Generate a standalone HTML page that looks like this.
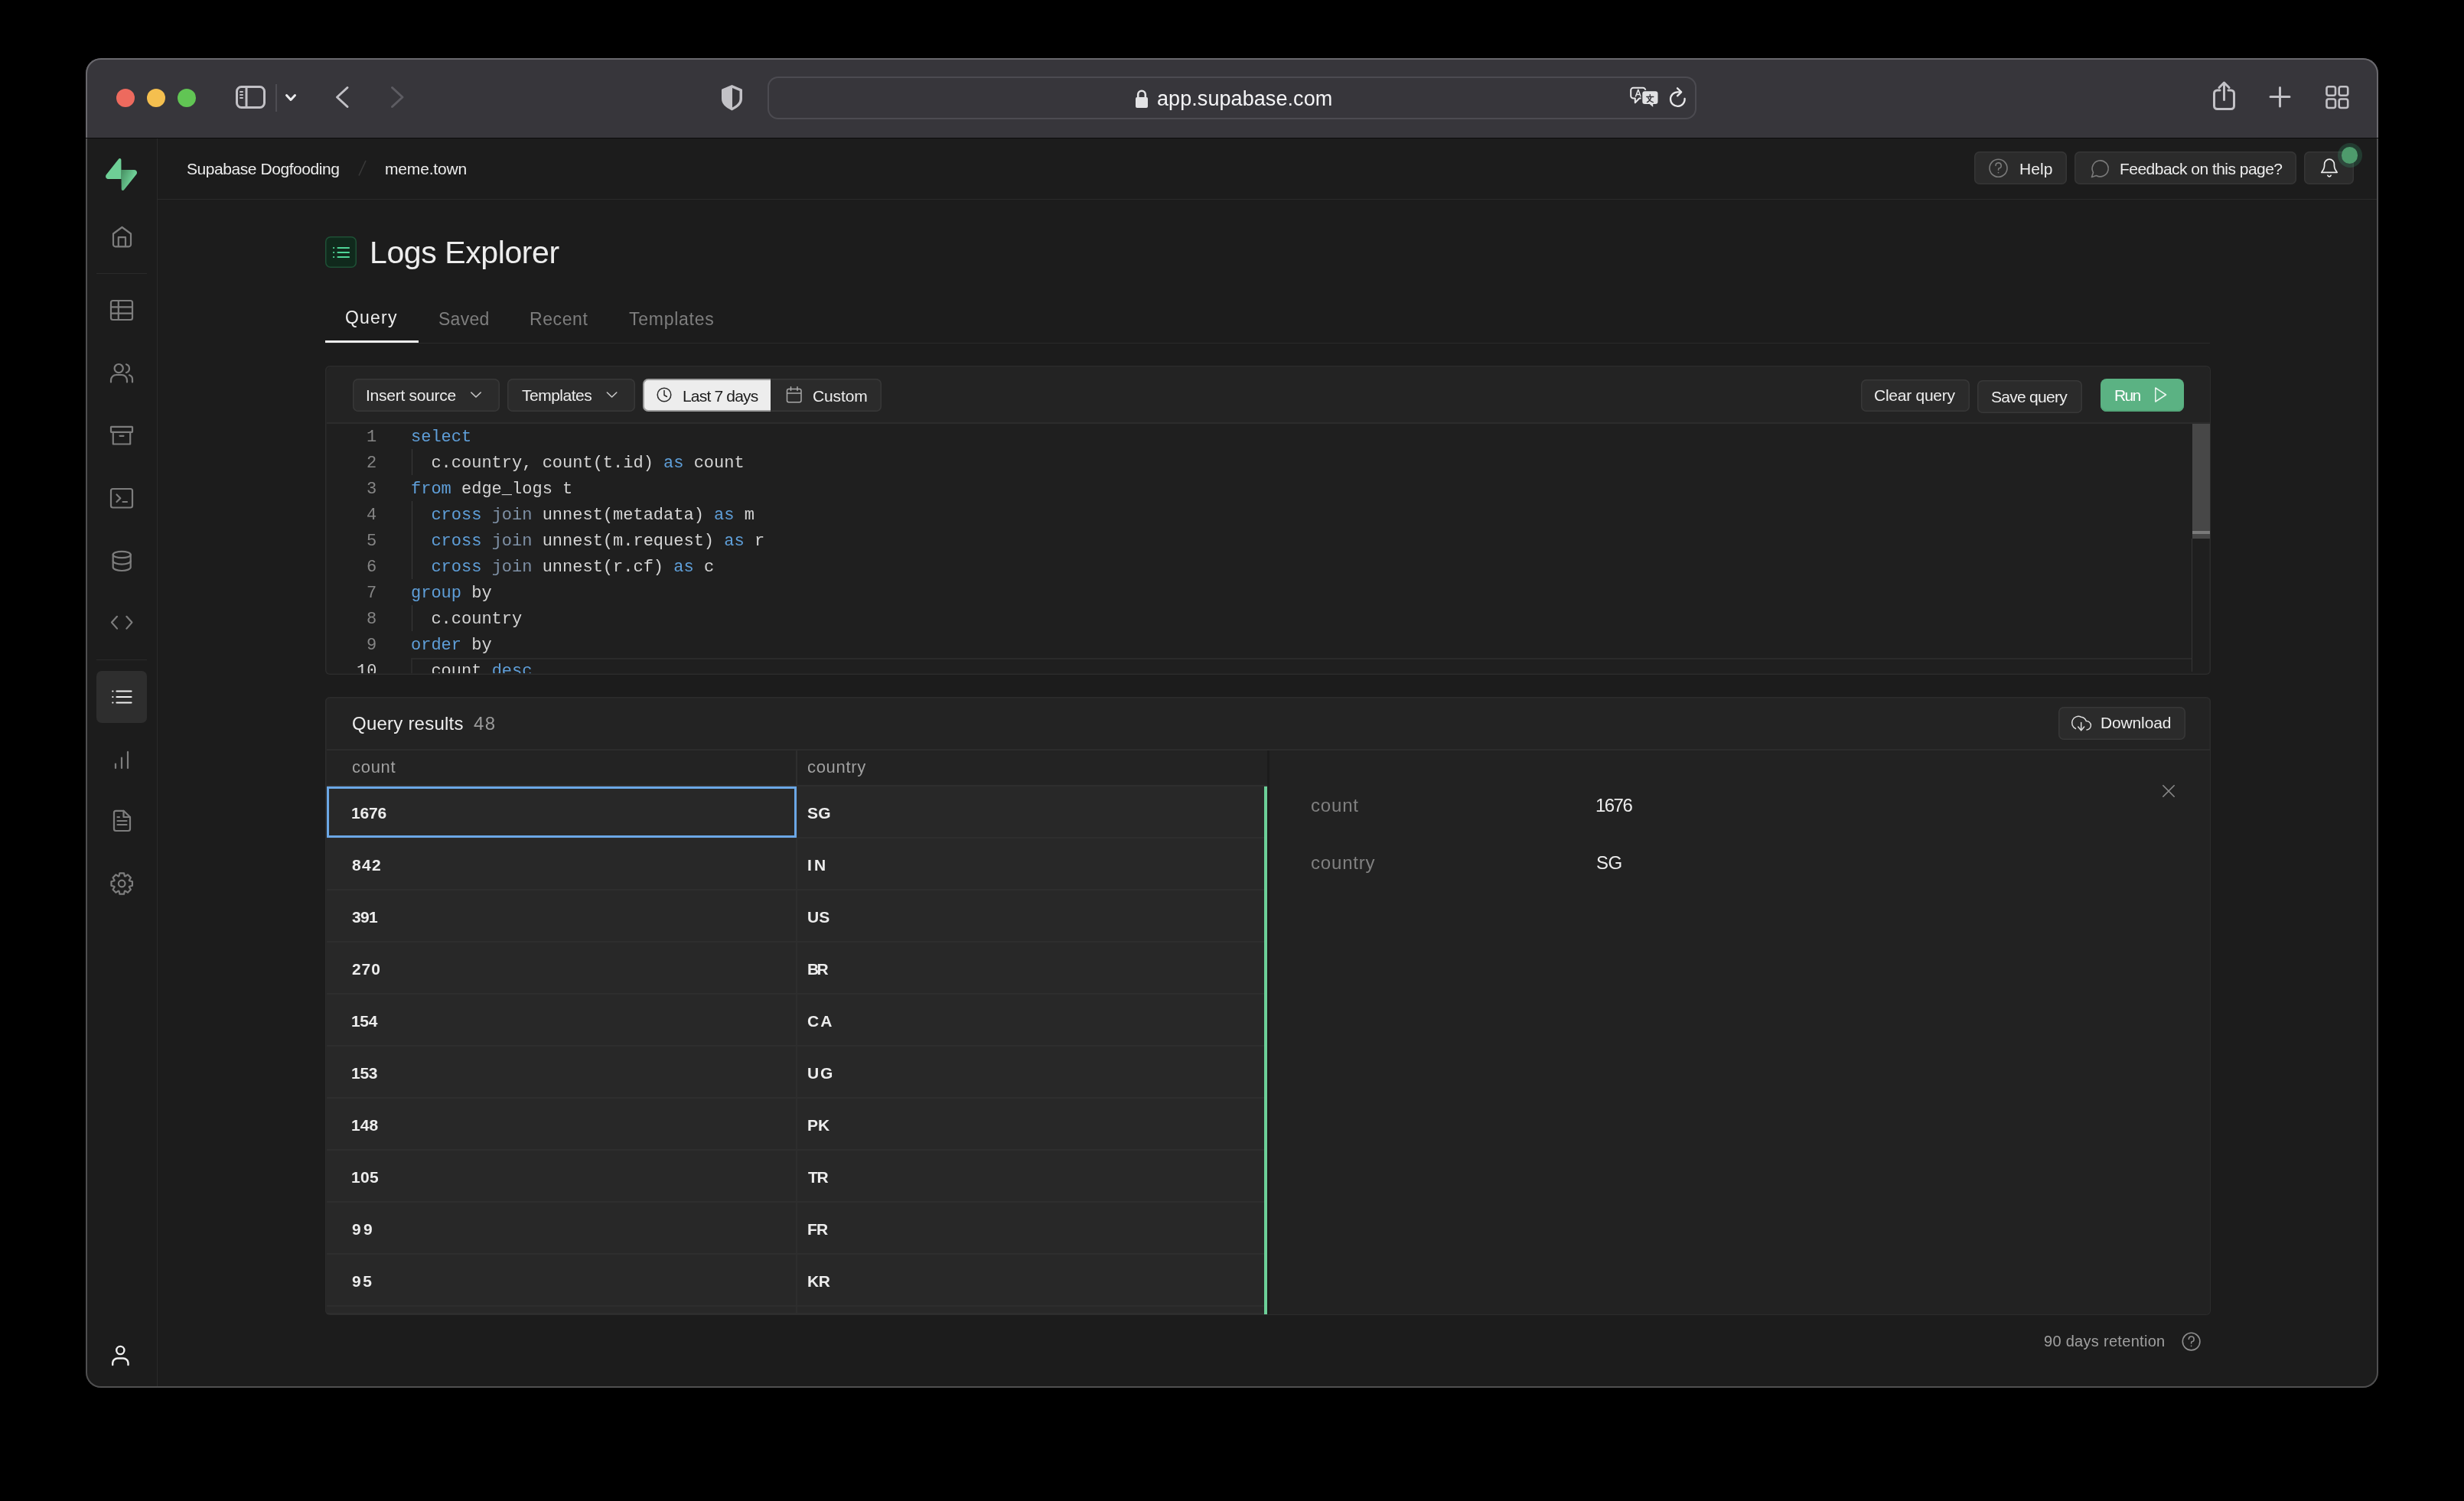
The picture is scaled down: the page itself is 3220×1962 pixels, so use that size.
<!DOCTYPE html>
<html><head><meta charset="utf-8"><title>Logs Explorer</title>
<style>
*{box-sizing:border-box;margin:0;padding:0}
html,body{width:3220px;height:1962px;background:#000;overflow:hidden}
body{position:relative;font-family:"Liberation Sans",sans-serif;color:#ededed}
.a{position:absolute}
.t{position:absolute;white-space:pre;line-height:1;will-change:transform}
.mono{font-family:"Liberation Mono",monospace}
svg{position:absolute;overflow:visible}
</style></head>
<body>
<div class="a" style="left:112px;top:76px;width:2996px;height:1738px;border-radius:20px;background:#1c1c1c;overflow:hidden"></div>
<div class="a" style="left:112px;top:76px;width:2996px;height:104px;border-radius:20px 20px 0 0;background:#37363b"></div>
<div class="a" style="left:112px;top:180px;width:2996px;height:1px;background:#0b0b0b"></div>
<div class="a" style="left:112px;top:76px;width:2996px;height:104px;overflow:hidden"><div class="a" style="left:0;top:0;width:2996px;height:1738px;border-radius:20px;box-shadow:inset 0 0 0 2px #69686d"></div></div>
<div class="a" style="left:112px;top:181px;width:2996px;height:1633px;overflow:hidden"><div class="a" style="left:0;top:-105px;width:2996px;height:1738px;border-radius:20px;box-shadow:inset 0 0 0 2px #4f4f50"></div></div>
<div class="a" style="left:152px;top:116px;width:24px;height:24px;border-radius:50%;background:#ed6a5e"></div>
<div class="a" style="left:192px;top:116px;width:24px;height:24px;border-radius:50%;background:#f4bf4f"></div>
<div class="a" style="left:232px;top:116px;width:24px;height:24px;border-radius:50%;background:#61c554"></div>
<svg style="left:300px;top:105px;width:100px;height:45px;" viewBox="300 105 100 45" fill="none"><rect x="309.5" y="113.5" width="36" height="27" rx="6" stroke="#c2c1c6" stroke-width="3"/><line x1="322" y1="113" x2="322" y2="141" stroke="#c2c1c6" stroke-width="3"/><g stroke="#c2c1c6" stroke-width="2" stroke-linecap="round"><line x1="314" y1="120" x2="317" y2="120"/><line x1="314" y1="124" x2="317" y2="124"/><line x1="314" y1="128" x2="317" y2="128"/></g><line x1="361" y1="110" x2="361" y2="146" stroke="#4d4c52" stroke-width="2"/><polyline points="374.5,124.5 380,130.5 385.5,124.5" stroke="#ececee" stroke-width="3" stroke-linecap="round" stroke-linejoin="round"/></svg>
<svg style="left:430px;top:105px;width:110px;height:45px;" viewBox="430 105 110 45" fill="none"><polyline points="454,114.5 440.5,127 454,139.5" stroke="#c2c1c6" stroke-width="3" stroke-linecap="round" stroke-linejoin="round"/><polyline points="512.5,114.5 526,127 512.5,139.5" stroke="#5d5c62" stroke-width="3" stroke-linecap="round" stroke-linejoin="round"/></svg>
<svg style="left:940px;top:108px;width:35px;height:40px;" viewBox="940 108 35 40" fill="none"><path d="M956.5 111 L969.5 116.5 C970 117 970 118 970 119 L970 129 C970 136 965 140 956.5 144.5 C948 140 943 136 943 129 L943 119 C943 118 943 117 943.5 116.5 Z" fill="#c2c1c6"/><path d="M957 115 L966.5 119 L966.5 129 C966.5 134 963 137 957 140.5 Z" fill="#37363b"/></svg>
<div class="a" style="left:1003px;top:100px;width:1214px;height:56px;border-radius:14px;box-shadow:inset 0 0 0 2px #4c4b51"></div>
<svg style="left:1480px;top:115px;width:25px;height:30px;" viewBox="1480 115 25 30" fill="none"><path d="M1487.2 128 V123.5 A4.8 4.8 0 0 1 1496.8 123.5 V128" stroke="#e2e2e4" stroke-width="2.6"/><rect x="1484" y="127" width="16" height="14" rx="2" fill="#e2e2e4"/></svg>
<div class="t" style="left:1512.43px;top:116.14px;font-size:27px;color:#f4f4f6;font-family:'Liberation Sans',sans-serif;letter-spacing:0.074px">app.supabase.com</div>
<svg style="left:2125px;top:110px;width:47px;height:36px;" viewBox="2125 110 47 36" fill="none"><path d="M2134.5 114.8 H2147 A3.3 3.3 0 0 1 2150.3 118.1 V125.2 A3.3 3.3 0 0 1 2147 128.5 H2142.3 L2136.8 134.3 V128.5 H2134.5 A3.3 3.3 0 0 1 2131.2 125.2 V118.1 A3.3 3.3 0 0 1 2134.5 114.8Z" stroke="#e6e6e8" stroke-width="2" stroke-linejoin="round"/><path d="M2137.3 126.5 L2140.8 117.3 L2144.3 126.5 M2138.4 123.6 H2143.2" stroke="#e6e6e8" stroke-width="1.5" stroke-linejoin="round"/><path d="M2149.5 118.5 H2163.3 A4 4 0 0 1 2167.3 122.5 V132.8 A4 4 0 0 1 2163.3 136.8 H2161 V141.5 L2155.3 136.8 H2149.5 A4 4 0 0 1 2145.5 132.8 V122.5 A4 4 0 0 1 2149.5 118.5Z" fill="#e2e2e4" stroke="#37363b" stroke-width="1.6"/><path d="M2151.8 126.5 H2160.8 M2156.3 123.8 V126.5 M2152.5 133.6 C2155 132.3 2157.2 129.5 2157.8 126.5 M2153.8 127.8 C2155.2 130.8 2157.5 133 2160.3 133.6" stroke="#37363b" stroke-width="1.4" stroke-linecap="round"/></svg>
<svg style="left:2178px;top:110px;width:30px;height:36px;" viewBox="2178 110 30 36" fill="none"><path d="M2201.6 128.8 A9.3 9.3 0 1 1 2192.3 120.3 H2195.5" stroke="#e8e8ea" stroke-width="2.3" stroke-linecap="round"/><polyline points="2192,115.3 2197.2,120.3 2192,125.3" stroke="#e8e8ea" stroke-width="2.3" stroke-linecap="round" stroke-linejoin="round"/></svg>
<svg style="left:2885px;top:102px;width:45px;height:46px;" viewBox="2885 102 45 46" fill="none"><path d="M2901 118 H2897.5 A4 4 0 0 0 2893.5 122 V138.5 A4 4 0 0 0 2897.5 142.5 H2915.5 A4 4 0 0 0 2919.5 138.5 V122 A4 4 0 0 0 2915.5 118 H2912" stroke="#c2c1c6" stroke-width="3" stroke-linecap="round"/><path d="M2906.5 130.5 V108.5 M2900 114.5 L2906.5 108 L2913 114.5" stroke="#c2c1c6" stroke-width="3" stroke-linecap="round" stroke-linejoin="round"/></svg>
<svg style="left:2960px;top:108px;width:40px;height:38px;" viewBox="2960 108 40 38" fill="none"><path d="M2979.5 114.5 V139 M2967 126.5 H2992" stroke="#c2c1c6" stroke-width="3" stroke-linecap="round"/></svg>
<svg style="left:3035px;top:108px;width:40px;height:38px;" viewBox="3035 108 40 38" fill="none"><g stroke="#c2c1c6" stroke-width="2.6"><rect x="3040.5" y="113.3" width="11.5" height="11.5" rx="2.5"/><rect x="3056.7" y="113.3" width="11.5" height="11.5" rx="2.5"/><rect x="3040.5" y="129.5" width="11.5" height="11.5" rx="2.5"/><rect x="3056.7" y="129.5" width="11.5" height="11.5" rx="2.5"/></g></svg>
<div class="a" style="left:205px;top:181px;width:1px;height:1631px;background:#2a2a2a"></div>
<div class="a" style="left:206px;top:260px;width:2900px;height:1px;background:#2a2a2a"></div>
<svg style="left:137.8px;top:206.7px;width:41.099999999999994px;height:42.400000000000006px;" viewBox="0 0 109 113" fill="none"><defs><linearGradient id="lg0" x1="53.97" y1="54.97" x2="94.16" y2="71.83" gradientUnits="userSpaceOnUse"><stop stop-color="#4a9466"/><stop offset="1" stop-color="#6ecf96"/></linearGradient></defs><path d="M63.7076 110.284C60.8481 113.885 55.0502 111.912 54.9813 107.314L53.9738 40.0627L99.1935 40.0627C107.384 40.0627 111.952 49.5228 106.859 55.9374L63.7076 110.284Z" fill="url(#lg0)"/><path d="M45.317 2.07103C48.1765 -1.53037 53.9745 0.442937 54.0434 5.04075L54.4849 72.2922H9.83113C1.64038 72.2922 -2.92775 62.8321 2.1655 56.4175L45.317 2.07103Z" fill="#6ecf96"/></svg>
<svg style="left:142px;top:291px;width:35px;height:37px;" viewBox="142 291 35 37" fill="none"><g stroke="#7d7d7d" stroke-width="2.2" stroke-linecap="round" stroke-linejoin="round" fill="none"><path d="M148 305.5 L159.5 297 L171 305.5 V319.5 A2.8 2.8 0 0 1 168.2 322.3 H150.8 A2.8 2.8 0 0 1 148 319.5 Z"/><path d="M154.8 322 V310.2 H164 V322"/></g></svg>
<div class="a" style="left:126px;top:357px;width:66px;height:1px;background:#2a2a2a"></div>
<svg style="left:139px;top:387px;width:40px;height:37px;" viewBox="139 387 40 37" fill="none"><g stroke="#7d7d7d" stroke-width="2.2" stroke-linecap="round" stroke-linejoin="round" fill="none"><rect x="145" y="393" width="28" height="25" rx="2.5"/><line x1="145" y1="401.3" x2="173" y2="401.3"/><line x1="145" y1="409.6" x2="173" y2="409.6"/><line x1="154.8" y1="393" x2="154.8" y2="418"/></g></svg>
<svg style="left:139px;top:470px;width:40px;height:35px;" viewBox="139 470 40 35" fill="none"><g stroke="#7d7d7d" stroke-width="2.2" stroke-linecap="round" stroke-linejoin="round" fill="none"><circle cx="155.2" cy="481.6" r="5.6"/><path d="M145 499.5 V497 A7 7 0 0 1 152 490 H159 A7 7 0 0 1 166 497 V499.5"/><path d="M165 476.3 A5.6 5.6 0 0 1 165 487"/><path d="M169 490.3 A6 6 0 0 1 173 496.5 V499.5"/></g></svg>
<svg style="left:139px;top:552px;width:40px;height:34px;" viewBox="139 552 40 34" fill="none"><g stroke="#7d7d7d" stroke-width="2.2" stroke-linecap="round" stroke-linejoin="round" fill="none"><rect x="145" y="557.8" width="28" height="7" rx="0.5"/><path d="M147.8 565 V580.5 H170.2 V565"/><line x1="156.5" y1="569.8" x2="161.5" y2="569.8"/></g></svg>
<svg style="left:139px;top:633px;width:40px;height:36px;" viewBox="139 633 40 36" fill="none"><g stroke="#7d7d7d" stroke-width="2.2" stroke-linecap="round" stroke-linejoin="round" fill="none"><rect x="145" y="639" width="28" height="24.5" rx="2.5"/><polyline points="152.5,646.5 157.3,651.2 152.5,656"/><line x1="160.5" y1="656" x2="166" y2="656"/></g></svg>
<svg style="left:142px;top:715px;width:34px;height:37px;" viewBox="142 715 34 37" fill="none"><g stroke="#7d7d7d" stroke-width="2.2" stroke-linecap="round" stroke-linejoin="round" fill="none"><ellipse cx="159.2" cy="725" rx="11.5" ry="4.2"/><path d="M147.7 725 V741.5 C147.7 743.8 152.8 746 159.2 746 C165.6 746 170.7 743.8 170.7 741.5 V725"/><path d="M147.7 733.2 C147.7 735.5 152.8 737.6 159.2 737.6 C165.6 737.6 170.7 735.5 170.7 733.2"/></g></svg>
<svg style="left:140px;top:800px;width:38px;height:28px;" viewBox="140 800 38 28" fill="none"><g stroke="#7d7d7d" stroke-width="2.2" stroke-linecap="round" stroke-linejoin="round" fill="none"><polyline points="153,805.8 146,813.6 153,821.6"/><polyline points="165.4,805.8 172.4,813.6 165.4,821.6"/></g></svg>
<div class="a" style="left:126px;top:862px;width:66px;height:1px;background:#2a2a2a"></div>
<div class="a" style="left:126px;top:877px;width:66px;height:68px;background:#2e2e2e;border-radius:7px"></div>
<svg style="left:141px;top:897px;width:37px;height:28px;" viewBox="141 897 37 28" fill="none"><g stroke="#f0f0f0" stroke-width="2.2" stroke-linecap="round" stroke-linejoin="round" fill="none"><line x1="152.5" y1="903.5" x2="171.5" y2="903.5"/><line x1="152.5" y1="911" x2="171.5" y2="911"/><line x1="152.5" y1="918.5" x2="171.5" y2="918.5"/><line x1="147.3" y1="903.5" x2="147.4" y2="903.5"/><line x1="147.3" y1="911" x2="147.4" y2="911"/><line x1="147.3" y1="918.5" x2="147.4" y2="918.5"/></g></svg>
<svg style="left:145px;top:977px;width:28px;height:33px;" viewBox="145 977 28 33" fill="none"><g stroke="#7d7d7d" stroke-width="2.2" stroke-linecap="round" stroke-linejoin="round" fill="none"><line x1="151" y1="998.5" x2="151" y2="1004"/><line x1="159" y1="990.5" x2="159" y2="1004"/><line x1="167" y1="982.8" x2="167" y2="1004"/></g></svg>
<svg style="left:143px;top:1054px;width:33px;height:38px;" viewBox="143 1054 33 38" fill="none"><g stroke="#7d7d7d" stroke-width="2.2" stroke-linecap="round" stroke-linejoin="round" fill="none"><path d="M161.5 1059.8 H151.5 A2.5 2.5 0 0 0 149 1062.3 V1083.5 A2.5 2.5 0 0 0 151.5 1086 H167.5 A2.5 2.5 0 0 0 170 1083.5 V1068 Z"/><path d="M161.5 1059.8 V1068 H170"/><line x1="153.5" y1="1073" x2="165.5" y2="1073"/><line x1="153.5" y1="1078" x2="165.5" y2="1078"/><line x1="153.5" y1="1068" x2="156" y2="1068"/></g></svg>
<svg style="left:139px;top:1135px;width:40px;height:40px;" viewBox="139 1135 40 40" fill="none"><g stroke="#7d7d7d" stroke-width="2.2" stroke-linecap="round" stroke-linejoin="round" fill="none"><path d="M172.92 1152.22 L172.92 1157.78 L169.03 1158.70 L168.76 1159.33 L170.87 1162.74 L166.94 1166.67 L163.53 1164.56 L162.90 1164.83 L161.98 1168.72 L156.42 1168.72 L155.50 1164.83 L154.87 1164.56 L151.46 1166.67 L147.53 1162.74 L149.64 1159.33 L149.37 1158.70 L145.48 1157.78 L145.48 1152.22 L149.37 1151.30 L149.64 1150.67 L147.53 1147.26 L151.46 1143.33 L154.87 1145.44 L155.50 1145.17 L156.42 1141.28 L161.98 1141.28 L162.90 1145.17 L163.53 1145.44 L166.94 1143.33 L170.87 1147.26 L168.76 1150.67 L169.03 1151.30Z"/><circle cx="159.2" cy="1155" r="4.3"/></g></svg>
<svg style="left:141px;top:1754px;width:33px;height:35px;" viewBox="141 1754 33 35" fill="none"><g stroke="#f0f0f0" stroke-width="2.4" stroke-linecap="round" stroke-linejoin="round" fill="none"><circle cx="157.3" cy="1765" r="5.1"/><path d="M147.2 1784 V1782 A6.5 6.5 0 0 1 153.7 1775.5 H161 A6.5 6.5 0 0 1 167.5 1782 V1784"/></g></svg>
<div class="t" style="left:243.66px;top:209.72px;font-size:21px;color:#ededed;font-family:'Liberation Sans',sans-serif;letter-spacing:-0.437px">Supabase Dogfooding</div>
<svg style="left:465px;top:208px;width:17px;height:24px;" viewBox="465 208 17 24" fill="none"><line x1="469" y1="229.5" x2="478" y2="210" stroke="#3a3a3a" stroke-width="1.5"/></svg>
<div class="t" style="left:503.29px;top:209.72px;font-size:21px;color:#ededed;font-family:'Liberation Sans',sans-serif;letter-spacing:-0.167px">meme.town</div>
<div class="a" style="left:2580px;top:198px;width:121px;height:43px;background:#2b2b2b;box-shadow:inset 0 0 0 1.5px #363636;border-radius:7px"></div>
<div class="a" style="left:2711px;top:198px;width:290px;height:43px;background:#2b2b2b;box-shadow:inset 0 0 0 1.5px #363636;border-radius:7px"></div>
<div class="a" style="left:3011px;top:198px;width:65px;height:43px;background:#2b2b2b;box-shadow:inset 0 0 0 1.5px #363636;border-radius:7px"></div>
<svg style="left:2596px;top:215px;width:32px;height:17px;top:204px;height:32px" viewBox="2596 204 32 32" fill="none"><circle cx="2611.5" cy="219.7" r="11.5" stroke="#7a7a7a" stroke-width="1.6"/><path d="M2608 216.5 A3.6 3.6 0 1 1 2612.2 220 C2611.6 220.3 2611.5 221 2611.5 222.2" stroke="#7a7a7a" stroke-width="1.6" stroke-linecap="round"/><circle cx="2611.5" cy="225.6" r="0.9" fill="#7a7a7a"/></svg>
<div class="t" style="left:2638.55px;top:209.62px;font-size:21px;color:#ededed;font-family:'Liberation Sans',sans-serif;letter-spacing:0.057px">Help</div>
<svg style="left:2728px;top:204px;width:32px;height:32px;" viewBox="2728 204 32 32" fill="none"><path d="M2733.5 231.5 L2735.5 225.5 A10.5 10.5 0 1 1 2739.5 229.5 Z" stroke="#7a7a7a" stroke-width="1.6" stroke-linejoin="round"/></svg>
<div class="t" style="left:2769.68px;top:209.62px;font-size:21px;color:#ededed;font-family:'Liberation Sans',sans-serif;letter-spacing:-0.530px">Feedback on this page?</div>
<svg style="left:3028px;top:200px;width:32px;height:38px;" viewBox="3028 200 32 38" fill="none"><path d="M3033.8 225.4 L3036.3 221.5 C3037.1 220 3037.6 218.2 3037.6 216.3 V214.6 A6.4 6.4 0 0 1 3050.4 214.6 V216.3 C3050.4 218.2 3050.9 220 3051.7 221.5 L3054.2 225.4 Z" stroke="#ececec" stroke-width="1.7" stroke-linejoin="round"/><path d="M3041.9 229.3 A2.2 2.2 0 0 0 3046.1 229.3" stroke="#ececec" stroke-width="1.7" stroke-linecap="round"/></svg>
<div class="a" style="left:3054.5px;top:187px;width:32.0px;height:32px;border-radius:50%;background:radial-gradient(circle, rgba(62,207,142,0.2) 0%, rgba(62,207,142,0.17) 75%, rgba(62,207,142,0) 100%)"></div>
<div class="a" style="left:3059.9px;top:192.4px;width:21.199999999999818px;height:21.19999999999999px;border-radius:50%;background:#4e9b6c"></div>
<div class="a" style="left:425px;top:309px;width:41px;height:41px;background:#10291c;box-shadow:inset 0 0 0 1.5px #1f5136;border-radius:7px"></div>
<svg style="left:430px;top:315px;width:32px;height:30px;" viewBox="430 315 32 30" fill="none"><g stroke="#4fd497" stroke-width="2.2" stroke-linecap="round"><line x1="441.5" y1="324" x2="456" y2="324"/><line x1="441.5" y1="330" x2="456" y2="330"/><line x1="441.5" y1="336" x2="456" y2="336"/><line x1="436" y1="324" x2="436.2" y2="324"/><line x1="436" y1="330" x2="436.2" y2="330"/><line x1="436" y1="336" x2="436.2" y2="336"/></g></svg>
<div class="t" style="left:483.34px;top:309.59px;font-size:41px;color:#ededed;font-family:'Liberation Sans',sans-serif;letter-spacing:-0.406px">Logs Explorer</div>
<div class="t" style="left:451.31px;top:403.83px;font-size:23px;color:#ededed;font-family:'Liberation Sans',sans-serif;letter-spacing:1.207px">Query</div>
<div class="t" style="left:573.21px;top:405.73px;font-size:23px;color:#7e7e7e;font-family:'Liberation Sans',sans-serif;letter-spacing:0.251px">Saved</div>
<div class="t" style="left:692.10px;top:405.73px;font-size:23px;color:#7e7e7e;font-family:'Liberation Sans',sans-serif;letter-spacing:0.581px">Recent</div>
<div class="t" style="left:822.14px;top:405.73px;font-size:23px;color:#7e7e7e;font-family:'Liberation Sans',sans-serif;letter-spacing:0.746px">Templates</div>
<div class="a" style="left:425px;top:448px;width:2463px;height:1px;background:#2a2a2a"></div>
<div class="a" style="left:425px;top:445px;width:122px;height:3px;background:#ededed"></div>
<div class="a" style="left:425px;top:478px;width:2464px;height:404px;background:#1f1f1f;box-shadow:inset 0 0 0 1.5px #2c2c2c;border-radius:6px"></div>
<div class="a" style="left:426.5px;top:479.5px;width:2461.0px;height:72.5px;background:#232323;border-radius:5px 5px 0 0"></div>
<div class="a" style="left:426.5px;top:552px;width:2461.0px;height:1.5px;background:#2c2c2c"></div>
<div class="a" style="left:461px;top:495px;width:192px;height:42.5px;background:#2b2b2b;box-shadow:inset 0 0 0 1.5px #383838;border-radius:7px"></div>
<div class="t" style="left:478.15px;top:506.42px;font-size:21px;color:#ededed;font-family:'Liberation Sans',sans-serif;letter-spacing:-0.259px">Insert source</div>
<svg style="left:610px;top:505px;width:24px;height:20px;" viewBox="610 505 24 20" fill="none"><polyline points="615.8,513 622,519 628.2,513" stroke="#c8c8c8" stroke-width="1.6" stroke-linecap="round" stroke-linejoin="round"/></svg>
<div class="a" style="left:663px;top:495px;width:167px;height:42.5px;background:#2b2b2b;box-shadow:inset 0 0 0 1.5px #383838;border-radius:7px"></div>
<div class="t" style="left:682.34px;top:506.42px;font-size:21px;color:#ededed;font-family:'Liberation Sans',sans-serif;letter-spacing:-0.499px">Templates</div>
<svg style="left:788px;top:505px;width:24px;height:20px;" viewBox="788 505 24 20" fill="none"><polyline points="793.4,513 799.6,519 805.8,513" stroke="#c8c8c8" stroke-width="1.6" stroke-linecap="round" stroke-linejoin="round"/></svg>
<div class="a" style="left:840px;top:495px;width:311.5px;height:42.700000000000045px;background:#2b2b2b;box-shadow:inset 0 0 0 1.5px #383838;border-radius:7px"></div>
<div class="a" style="left:840px;top:495px;width:167px;height:42.700000000000045px;background:#ededed;border:2px solid #9d9d9d;border-right:none;border-radius:7px 0 0 7px"></div>
<svg style="left:855px;top:503px;width:26px;height:26px;" viewBox="855 503 26 26" fill="none"><circle cx="868" cy="516" r="8.8" stroke="#2a2a2a" stroke-width="1.5"/><polyline points="868,510.5 868,516.5 871.5,518.5" stroke="#2a2a2a" stroke-width="1.5" stroke-linecap="round" stroke-linejoin="round"/></svg>
<div class="t" style="left:892.22px;top:506.52px;font-size:21px;color:#1c1c1c;font-family:'Liberation Sans',sans-serif;letter-spacing:-0.823px">Last 7 days</div>
<svg style="left:1024px;top:502px;width:27px;height:28px;" viewBox="1024 502 27 28" fill="none"><rect x="1028.5" y="508.5" width="18.5" height="17.3" rx="2.2" stroke="#a8a8a8" stroke-width="1.5"/><line x1="1028.5" y1="514" x2="1047" y2="514" stroke="#a8a8a8" stroke-width="1.5"/><line x1="1033.5" y1="505.8" x2="1033.5" y2="510.5" stroke="#a8a8a8" stroke-width="1.5" stroke-linecap="round"/><line x1="1042" y1="505.8" x2="1042" y2="510.5" stroke="#a8a8a8" stroke-width="1.5" stroke-linecap="round"/></svg>
<div class="t" style="left:1062.35px;top:506.52px;font-size:21px;color:#ededed;font-family:'Liberation Sans',sans-serif;letter-spacing:-0.137px">Custom</div>
<div class="a" style="left:2431.5px;top:495.5px;width:142.0px;height:42.10000000000002px;background:#2b2b2b;box-shadow:inset 0 0 0 1.5px #383838;border-radius:7px"></div>
<div class="t" style="left:2448.72px;top:505.92px;font-size:21px;color:#ededed;font-family:'Liberation Sans',sans-serif;letter-spacing:-0.256px">Clear query</div>
<div class="a" style="left:2584.4px;top:497.4px;width:136.19999999999982px;height:42.200000000000045px;background:#2b2b2b;box-shadow:inset 0 0 0 1.5px #383838;border-radius:7px"></div>
<div class="t" style="left:2601.62px;top:507.82px;font-size:21px;color:#ededed;font-family:'Liberation Sans',sans-serif;letter-spacing:-0.720px">Save query</div>
<div class="a" style="left:2745px;top:495px;width:109px;height:43px;background:#5bb283;box-shadow:inset 0 -2px 0 #53a679;border-radius:8px"></div>
<div class="t" style="left:2762.61px;top:506.32px;font-size:21px;color:#ffffff;font-family:'Liberation Sans',sans-serif;letter-spacing:-1.686px">Run</div>
<svg style="left:2812px;top:503px;width:24px;height:26px;" viewBox="2812 503 24 26" fill="none"><path d="M2816.8 507 L2830.5 516 L2816.8 525 Z" stroke="#eaf6ef" stroke-width="1.5" stroke-linejoin="round"/></svg>
<div class="a" style="left:537px;top:860px;width:2327px;height:19.5px;border-top:2.5px solid #2a2a2a;border-left:2.5px solid #2a2a2a"></div>
<div class="a" style="left:426px;top:553.5px;width:2438px;height:326px;overflow:hidden">
<div class="t mono" style="left:53.30px;top:1.65px;font-size:22px;line-height:34px;color:#858585">1</div>
<div class="t mono" style="left:111.00px;top:1.65px;font-size:22px;line-height:34px"><span style="color:#5f9fd9">select</span></div>
<div class="t mono" style="left:53.30px;top:35.65px;font-size:22px;line-height:34px;color:#858585">2</div>
<div class="t mono" style="left:111.00px;top:35.65px;font-size:22px;line-height:34px"><span style="color:#d4d4d4">  </span><span style="color:#d4d4d4">c.country, count(t.id) </span><span style="color:#5f9fd9">as</span><span style="color:#d4d4d4"> count</span></div>
<div class="t mono" style="left:53.30px;top:69.65px;font-size:22px;line-height:34px;color:#858585">3</div>
<div class="t mono" style="left:111.00px;top:69.65px;font-size:22px;line-height:34px"><span style="color:#5f9fd9">from</span><span style="color:#d4d4d4"> edge_logs t</span></div>
<div class="t mono" style="left:53.30px;top:103.65px;font-size:22px;line-height:34px;color:#858585">4</div>
<div class="t mono" style="left:111.00px;top:103.65px;font-size:22px;line-height:34px"><span style="color:#d4d4d4">  </span><span style="color:#5f9fd9">cross</span><span style="color:#d4d4d4"> </span><span style="color:#7f91a6">join</span><span style="color:#d4d4d4"> unnest(metadata) </span><span style="color:#5f9fd9">as</span><span style="color:#d4d4d4"> m</span></div>
<div class="t mono" style="left:53.30px;top:137.65px;font-size:22px;line-height:34px;color:#858585">5</div>
<div class="t mono" style="left:111.00px;top:137.65px;font-size:22px;line-height:34px"><span style="color:#d4d4d4">  </span><span style="color:#5f9fd9">cross</span><span style="color:#d4d4d4"> </span><span style="color:#7f91a6">join</span><span style="color:#d4d4d4"> unnest(m.request) </span><span style="color:#5f9fd9">as</span><span style="color:#d4d4d4"> r</span></div>
<div class="t mono" style="left:53.30px;top:171.65px;font-size:22px;line-height:34px;color:#858585">6</div>
<div class="t mono" style="left:111.00px;top:171.65px;font-size:22px;line-height:34px"><span style="color:#d4d4d4">  </span><span style="color:#5f9fd9">cross</span><span style="color:#d4d4d4"> </span><span style="color:#7f91a6">join</span><span style="color:#d4d4d4"> unnest(r.cf) </span><span style="color:#5f9fd9">as</span><span style="color:#d4d4d4"> c</span></div>
<div class="t mono" style="left:53.30px;top:205.65px;font-size:22px;line-height:34px;color:#858585">7</div>
<div class="t mono" style="left:111.00px;top:205.65px;font-size:22px;line-height:34px"><span style="color:#5f9fd9">group</span><span style="color:#d4d4d4"> by</span></div>
<div class="t mono" style="left:53.30px;top:239.65px;font-size:22px;line-height:34px;color:#858585">8</div>
<div class="t mono" style="left:111.00px;top:239.65px;font-size:22px;line-height:34px"><span style="color:#d4d4d4">  </span><span style="color:#d4d4d4">c.country</span></div>
<div class="t mono" style="left:53.30px;top:273.65px;font-size:22px;line-height:34px;color:#858585">9</div>
<div class="t mono" style="left:111.00px;top:273.65px;font-size:22px;line-height:34px"><span style="color:#5f9fd9">order</span><span style="color:#d4d4d4"> by</span></div>
<div class="t mono" style="left:40.10px;top:307.65px;font-size:22px;line-height:34px;color:#d4d4d4">10</div>
<div class="t mono" style="left:111.00px;top:307.65px;font-size:22px;line-height:34px"><span style="color:#d4d4d4">  </span><span style="color:#d4d4d4">count </span><span style="color:#5f9fd9">desc</span></div>
</div>
<div class="a" style="left:538px;top:587px;width:1.2999999999999545px;height:34px;background:#3a3a3a"></div>
<div class="a" style="left:538px;top:655px;width:1.2999999999999545px;height:34px;background:#3a3a3a"></div>
<div class="a" style="left:538px;top:689px;width:1.2999999999999545px;height:34px;background:#3a3a3a"></div>
<div class="a" style="left:538px;top:723px;width:1.2999999999999545px;height:34px;background:#3a3a3a"></div>
<div class="a" style="left:538px;top:791px;width:1.2999999999999545px;height:34px;background:#3a3a3a"></div>
<div class="a" style="left:2864.5px;top:554px;width:23.5px;height:150px;background:#474747"></div>
<div class="a" style="left:2864.5px;top:694px;width:23.5px;height:3.5px;background:#7a7a7a"></div>
<div class="a" style="left:2864px;top:704px;width:1px;height:174px;background:#363636"></div>
<div class="a" style="left:425px;top:911px;width:2464px;height:808px;background:#232323;box-shadow:inset 0 0 0 1.5px #2c2c2c;border-radius:6px"></div>
<div class="t" style="left:459.61px;top:933.88px;font-size:24px;color:#ededed;font-family:'Liberation Sans',sans-serif;letter-spacing:0.229px">Query results</div>
<div class="t" style="left:618.76px;top:933.88px;font-size:24px;color:#9a9a9a;font-family:'Liberation Sans',sans-serif;letter-spacing:1.304px">48</div>
<div class="a" style="left:2690.4px;top:924.1px;width:165.4000000000001px;height:42.60000000000002px;background:#2b2b2b;box-shadow:inset 0 0 0 1.5px #383838;border-radius:7px"></div>
<svg style="left:2703px;top:930px;width:34px;height:30px;" viewBox="2703 930 34 30" fill="none"><path d="M2712.5 952.5 A8.2 8.2 0 0 1 2719.7 937.2 A8 8 0 0 1 2726.3 942.5 A5.5 5.5 0 0 1 2727 954" stroke="#dcdcdc" stroke-width="1.5" stroke-linecap="round"/><polyline points="2715.7,950 2719.7,954.7 2723.7,950" stroke="#dcdcdc" stroke-width="1.5" stroke-linecap="round" stroke-linejoin="round"/><line x1="2719.7" y1="944.5" x2="2719.7" y2="954.5" stroke="#dcdcdc" stroke-width="1.5" stroke-linecap="round"/></svg>
<div class="t" style="left:2745.33px;top:934.42px;font-size:21px;color:#ededed;font-family:'Liberation Sans',sans-serif;letter-spacing:-0.143px">Download</div>
<div class="a" style="left:426.5px;top:979px;width:2461.0px;height:1.5px;background:#2c2c2c"></div>
<div class="a" style="left:426.5px;top:980.5px;width:1229.5px;height:46.5px;background:#232323"></div>
<div class="a" style="left:426.5px;top:1026px;width:1229.5px;height:1.5px;background:#2e2e2e"></div>
<div class="a" style="left:1040px;top:980.5px;width:1.5px;height:736.5px;background:#2e2e2e"></div>
<div class="t" style="left:459.57px;top:991.97px;font-size:22px;color:#a0a0a0;font-family:'Liberation Sans',sans-serif;letter-spacing:0.703px">count</div>
<div class="t" style="left:1054.95px;top:991.97px;font-size:22px;color:#a0a0a0;font-family:'Liberation Sans',sans-serif;letter-spacing:0.679px">country</div>
<div class="a" style="left:426.5px;top:1027.5px;width:1225.5px;height:690.0px;background:#282828"></div>
<div class="a" style="left:426.5px;top:1094.0px;width:1225.5px;height:1.5px;background:#2e2e2e"></div>
<div class="t" style="left:459.43px;top:1051.92px;font-size:21px;color:#ededed;font-family:'Liberation Sans',sans-serif;font-weight:700;letter-spacing:-0.183px">1676</div>
<div class="t" style="left:1055.21px;top:1051.92px;font-size:21px;color:#ededed;font-family:'Liberation Sans',sans-serif;font-weight:700;letter-spacing:0.188px">SG</div>
<div class="a" style="left:426.5px;top:1162.0px;width:1225.5px;height:1.5px;background:#2e2e2e"></div>
<div class="t" style="left:459.94px;top:1119.92px;font-size:21px;color:#ededed;font-family:'Liberation Sans',sans-serif;font-weight:700;letter-spacing:1.353px">842</div>
<div class="t" style="left:1054.73px;top:1119.92px;font-size:21px;color:#ededed;font-family:'Liberation Sans',sans-serif;font-weight:700;letter-spacing:3.062px">IN</div>
<div class="a" style="left:426.5px;top:1230.0px;width:1225.5px;height:1.5px;background:#2e2e2e"></div>
<div class="t" style="left:460.00px;top:1187.92px;font-size:21px;color:#ededed;font-family:'Liberation Sans',sans-serif;font-weight:700;letter-spacing:-0.693px">391</div>
<div class="t" style="left:1054.84px;top:1187.92px;font-size:21px;color:#ededed;font-family:'Liberation Sans',sans-serif;font-weight:700;letter-spacing:0.023px">US</div>
<div class="a" style="left:426.5px;top:1298.0px;width:1225.5px;height:1.5px;background:#2e2e2e"></div>
<div class="t" style="left:459.92px;top:1255.92px;font-size:21px;color:#ededed;font-family:'Liberation Sans',sans-serif;font-weight:700;letter-spacing:0.891px">270</div>
<div class="t" style="left:1054.74px;top:1255.92px;font-size:21px;color:#ededed;font-family:'Liberation Sans',sans-serif;font-weight:700;letter-spacing:-2.664px">BR</div>
<div class="a" style="left:426.5px;top:1366.0px;width:1225.5px;height:1.5px;background:#2e2e2e"></div>
<div class="t" style="left:459.43px;top:1323.92px;font-size:21px;color:#ededed;font-family:'Liberation Sans',sans-serif;font-weight:700;letter-spacing:-0.306px">154</div>
<div class="t" style="left:1055.11px;top:1323.92px;font-size:21px;color:#ededed;font-family:'Liberation Sans',sans-serif;font-weight:700;letter-spacing:1.965px">CA</div>
<div class="a" style="left:426.5px;top:1434.0px;width:1225.5px;height:1.5px;background:#2e2e2e"></div>
<div class="t" style="left:459.43px;top:1391.92px;font-size:21px;color:#ededed;font-family:'Liberation Sans',sans-serif;font-weight:700;letter-spacing:-0.295px">153</div>
<div class="t" style="left:1054.84px;top:1391.92px;font-size:21px;color:#ededed;font-family:'Liberation Sans',sans-serif;font-weight:700;letter-spacing:1.823px">UG</div>
<div class="a" style="left:426.5px;top:1502.0px;width:1225.5px;height:1.5px;background:#2e2e2e"></div>
<div class="t" style="left:459.43px;top:1459.92px;font-size:21px;color:#ededed;font-family:'Liberation Sans',sans-serif;font-weight:700;letter-spacing:0.118px">148</div>
<div class="t" style="left:1054.74px;top:1459.92px;font-size:21px;color:#ededed;font-family:'Liberation Sans',sans-serif;font-weight:700;letter-spacing:0.107px">PK</div>
<div class="a" style="left:426.5px;top:1570.0px;width:1225.5px;height:1.5px;background:#2e2e2e"></div>
<div class="t" style="left:459.43px;top:1527.92px;font-size:21px;color:#ededed;font-family:'Liberation Sans',sans-serif;font-weight:700;letter-spacing:0.270px">105</div>
<div class="t" style="left:1055.66px;top:1527.92px;font-size:21px;color:#ededed;font-family:'Liberation Sans',sans-serif;font-weight:700;letter-spacing:-1.211px">TR</div>
<div class="a" style="left:426.5px;top:1638.0px;width:1225.5px;height:1.5px;background:#2e2e2e"></div>
<div class="t" style="left:459.88px;top:1595.92px;font-size:21px;color:#ededed;font-family:'Liberation Sans',sans-serif;font-weight:700;letter-spacing:3.201px">99</div>
<div class="t" style="left:1054.74px;top:1595.92px;font-size:21px;color:#ededed;font-family:'Liberation Sans',sans-serif;font-weight:700;letter-spacing:-0.730px">FR</div>
<div class="a" style="left:426.5px;top:1706.0px;width:1225.5px;height:1.5px;background:#2e2e2e"></div>
<div class="t" style="left:459.88px;top:1663.92px;font-size:21px;color:#ededed;font-family:'Liberation Sans',sans-serif;font-weight:700;letter-spacing:2.466px">95</div>
<div class="t" style="left:1054.74px;top:1663.92px;font-size:21px;color:#ededed;font-family:'Liberation Sans',sans-serif;font-weight:700;letter-spacing:-0.311px">KR</div>
<div class="a" style="left:426.5px;top:1716px;width:1225.5px;height:1.5px;background:#2e2e2e"></div>
<div class="a" style="left:1040px;top:1027.5px;width:1.5px;height:689.5px;background:#2e2e2e"></div>
<div class="a" style="left:427px;top:1028px;width:613.5px;height:66.5px;box-shadow:inset 0 0 0 3px #6ba7e6"></div>
<div class="a" style="left:1652px;top:1027.5px;width:4px;height:690.0px;background:#6ccf98"></div>
<div class="a" style="left:1656px;top:980.5px;width:2.5px;height:737.0px;background:#1c1c1c"></div>
<div class="a" style="left:1658.5px;top:980.5px;width:1229.0px;height:737.0px;background:#222222;border-radius:0 0 5px 0"></div>
<div class="t" style="left:1713.40px;top:1041.08px;font-size:24px;color:#808080;font-family:'Liberation Sans',sans-serif;letter-spacing:0.818px">count</div>
<div class="t" style="left:2085.28px;top:1041.08px;font-size:24px;color:#ededed;font-family:'Liberation Sans',sans-serif;letter-spacing:-1.537px">1676</div>
<div class="t" style="left:1713.40px;top:1115.58px;font-size:24px;color:#808080;font-family:'Liberation Sans',sans-serif;letter-spacing:0.815px">country</div>
<div class="t" style="left:2085.80px;top:1115.58px;font-size:24px;color:#ededed;font-family:'Liberation Sans',sans-serif;letter-spacing:-0.537px">SG</div>
<svg style="left:2820px;top:1020px;width:28px;height:28px;" viewBox="2820 1020 28 28" fill="none"><path d="M2826.8 1026.8 L2841.2 1041.2 M2841.2 1026.8 L2826.8 1041.2" stroke="#8a8a8a" stroke-width="1.6" stroke-linecap="round"/></svg>
<div class="t" style="left:2671.08px;top:1743.07px;font-size:20px;color:#a0a0a0;font-family:'Liberation Sans',sans-serif;letter-spacing:0.298px">90 days retention</div>
<svg style="left:2848px;top:1738px;width:32px;height:32px;" viewBox="2848 1738 32 32" fill="none"><circle cx="2863.6" cy="1753.6" r="11.3" stroke="#8e8e8e" stroke-width="1.6"/><path d="M2860.3 1750.5 A3.4 3.4 0 1 1 2864.2 1753.8 C2863.7 1754.1 2863.6 1754.8 2863.6 1756" stroke="#8e8e8e" stroke-width="1.6" stroke-linecap="round"/><circle cx="2863.6" cy="1759.3" r="0.9" fill="#8e8e8e"/></svg>
</body></html>
